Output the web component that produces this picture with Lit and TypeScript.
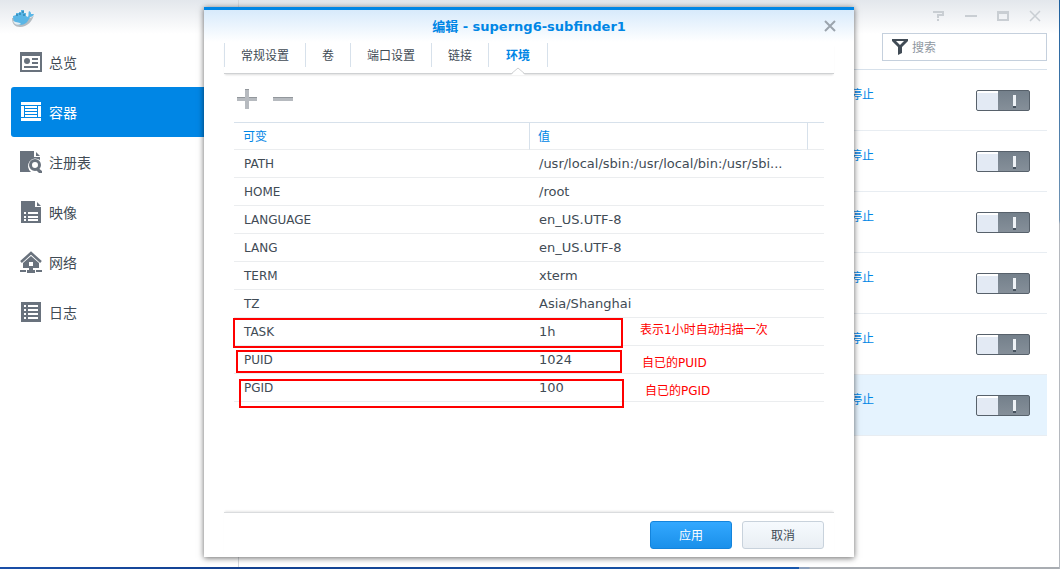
import { LitElement, html, css, svg } from "lit";
import { customElement, state } from "lit/decorators.js";

const icons: Record<string, unknown> = {
  overview: svg`<path fill-rule="evenodd" d="M0 1h22v20H0zM2 5v14h18V5z"/><circle cx="7" cy="10" r="3"/><path d="M12 7h6v2h-6zM12 11h6v2h-6zM4 15h14v2H4z"/>`,
  container: svg`<path d="M1 1h20v3H1zM1 17h20v3H1zM1 5h3v11H1zM18 5h3v11h-3zM5 5h12v2H5zM5 8h12v2H5zM5 11h12v2H5zM5 14h12v2H5z"/>`,
  registry: svg`<path d="M0 0h14v6h6v3a7 7 0 0 0-9 12H0z"/><path d="M16 1l4 4h-4z"/><circle cx="15" cy="14" r="4.500" fill="none" stroke="currentColor" stroke-width="3"/><path d="M17 16l5 4v2h-3l-3-3z"/>`,
  image: svg`<path fill-rule="evenodd" d="M1 0h14v6h6v16H1zM4 11v2h2v-2zM8 11v2h10v-2zM4 15v2h2v-2zM8 15v2h10v-2zM4 18v2h2v-2zM8 18v2h10v-2z"/><path d="M17 1l4 4h-4z"/>`,
  network: svg`<path d="M1 11L11 2l10 9" fill="none" stroke="currentColor" stroke-width="2.500"/><path fill-rule="evenodd" d="M11 5l8 7v5h-6v2h2v3H7v-3h2v-2H3v-5zM9 11v4h4v-4z"/><path d="M0 19h6v2H0zM16 19h6v2h-6z"/>`,
  log: svg`<path fill-rule="evenodd" d="M1 1h20v20H1zM4 4v2h2V4zM8 4v2h10V4zM4 8v2h2V8zM8 8v2h10V8zM4 12v2h2v-2zM8 12v2h10v-2zM4 16v2h2v-2zM8 16v2h10v-2z"/>`,
};

@customElement("app-root")
export class AppRoot extends LitElement {
  static styles = css`
    :host {
      display: block;
      position: relative;
      height: 100vh;
      overflow: hidden;
      box-sizing: border-box;
      color: #414b55;
      font: 12px/16px "DejaVu Sans", "Noto Sans CJK SC", sans-serif;
    }
    *, *::before, *::after { box-sizing: border-box; }
    button { font: inherit; cursor: pointer; }
    svg { display: block; }

    .desktop {
      height: 100%;
      display: grid;
      grid-template-rows: minmax(0, 1fr) 2px;
      padding-right: 1px;
      background: linear-gradient(#1c5f9e 0, #7295b4 220px, #b4b8be 224px, #b4b8be 100%);
    }
    .window {
      display: grid;
      grid-template-columns: 239px minmax(0, 1fr);
      background: linear-gradient(#e3e7ec, #fff 34px);
      min-height: 0;
    }
    .behind {
      background: linear-gradient(90deg, #1a4fa8 0, #12408f 240px, #1857ac 799px, #8b9fbb 799px, #8b9fbb 809px, #a9adb2 810px);
    }

    .side { border-right: 1px solid #d5d8dc; }
    .logo { display: block; margin: 9px 0 0 12px; }
    .nav { display: flex; flex-direction: column; padding: 10px 0 0 11px; }
    .item {
      display: flex;
      align-items: center;
      gap: 7px;
      height: 50px;
      padding-left: 9px;
      border-radius: 3px 0 0 3px;
      color: #414b55;
      font-size: 14px;
      line-height: 20px;
      text-decoration: none;
    }
    .item span { padding-top: 2px; }
    .item svg { color: #69727d; }
    .item.on, .item.on svg { color: #fff; }
    .item.on { background: #0086e5; }

    .main { display: flex; flex-direction: column; padding-right: 12px; }
    .controls { display: flex; justify-content: flex-end; gap: 16px; padding: 8px 4px 0 0; height: 33px; }
    .ctl { border: 0; padding: 0; width: 16px; height: 16px; background: none; color: #c9ced3; }
    .search {
      align-self: flex-end;
      display: flex;
      align-items: center;
      gap: 4px;
      width: 165px;
      height: 28px;
      padding: 0 9px;
      border: 1px solid #c5d0dd;
      background: #fff;
      color: #414b55;
    }
    .search input { flex: 1; min-width: 0; border: 0; padding: 2px 0 0; outline: 0; background: none; font: inherit; }
    .search input::placeholder { color: #8f979f; opacity: 1; }
    .list { margin: 8px 0 0; padding: 0; list-style: none; border-top: 1px solid #d7e1eb; }
    .row {
      display: flex;
      justify-content: space-between;
      align-items: flex-start;
      height: 61px;
      padding: 17px 17px 0 611px;
      border-bottom: 1px solid #e8edf2;
      color: #0086e5;
    }
    .row.on { background: #e5f3fe; }
    .toggle {
      appearance: none;
      margin: 3px 0 0;
      width: 54px;
      height: 21px;
      border: 1px solid #57616b;
      border-radius: 2px;
      background:
        linear-gradient(#eef2f6, #eef2f6) 36px 4px / 3px 11px no-repeat,
        linear-gradient(#46525e, #46525e) 36px 15px / 3px 2px no-repeat,
        linear-gradient(#fff 2px, #e3eaf4 2px) 0 0 / 21px 100% no-repeat,
        linear-gradient(#74808b, #858f99);
    }
    .toggle:checked { background: #0086e5; }

    .overlay {
      position: absolute;
      inset: 7px 2px 12px 0;
      display: flex;
      justify-content: center;
    }
    .dialog {
      display: flex;
      flex-direction: column;
      width: 650px;
      max-width: 100%;
      padding: 0 20px;
      border-top: 3px solid #0086e5;
      background: linear-gradient(#d7eafb, #fff 32px);
      box-shadow: 0 1px 6px rgba(0, 0, 0, 0.6);
    }
    .head { display: grid; grid-template-columns: 20px 1fr 20px; align-items: center; height: 33px; }
    .title { grid-column: 2; margin: 0; font-size: 13px; line-height: 16px; text-align: center; color: #0086e5; }
    .close { justify-self: end; border: 0; padding: 0; margin-right: -4px; width: 16px; height: 16px; background: none; color: #9ba4ad; }
    .tabs {
      display: flex;
      height: 31px;
      border-bottom: 1px solid #cfd1d3;
      box-shadow: 0 2px 2px -1px #ddd;
    }
    .tab {
      position: relative;
      height: 24px;
      padding: 2px 16px 0;
      border: 0;
      border-right: 1px solid #d7e1eb;
      background: none;
      color: #414b55;
    }
    .tab:first-child { border-left: 1px solid #d7e1eb; }
    .tab.on { color: #0086e5; font-weight: bold; padding: 2px 17px 0; }
    .tab.on svg { position: absolute; left: calc(50% - 7px); top: 24px; }
    .tools { display: flex; gap: 16px; padding: 15px 0 13px 13px; }
    .tool { border: 0; padding: 0; width: 20px; height: 20px; background: none; }

    .body { position: relative; flex: 1; margin: 0 10px; min-height: 0; }
    .grid { width: 100%; table-layout: fixed; border-collapse: separate; border-spacing: 0; border-top: 1px solid #d7e1eb; }
    .grid th { height: 27px; padding: 2px 8px 0; text-align: left; font-weight: normal; color: #0086e5; border-bottom: 1px solid #ebedef; border-right: 1px solid #d7e1eb; }
    .grid th:first-child { padding-left: 9px; }
    .grid th:last-child { border-right: 0; padding: 0; }
    .grid td { height: 28px; padding: 0 9px; border-bottom: 1px solid #ebedef; white-space: nowrap; }
    .grid td:first-child { padding-left: 10px; }
    .grid .value { font-size: 13px; }
    .grid .key { width: 296px; }
    .grid .end { width: 16px; }

    .mark { position: absolute; border: 2px solid #f00; pointer-events: none; }
    .note { position: absolute; color: #f00; white-space: nowrap; }
    .mark-task { left: -1px; top: 196px; width: 390px; height: 30px; }
    .mark-puid { left: 2px; top: 228px; width: 386px; height: 23px; }
    .mark-pgid { left: 5px; top: 257px; width: 385px; height: 29px; }
    .note-task { left: 406px; top: 200px; }
    .note-puid { left: 408px; top: 233px; }
    .note-pgid { left: 411px; top: 261px; }

    .foot {
      display: flex;
      justify-content: flex-end;
      gap: 10px;
      padding: 8px 10px;
      border-top: 1px solid #dadcde;
      box-shadow: 0 -2px 2px -1px #e8e8e8;
    }
    .btn { width: 82px; height: 28px; padding: 2px 0 0; border-radius: 3px; border: 1px solid #c8d2dc; background: linear-gradient(#f6fafe, #e9eef3); color: #414b55; }
    .btn.primary { border-color: #1484dc; background: linear-gradient(#33a8ff, #1a90ea); color: #fff; }
  `;

  @state() private nav = "container";
  @state() private tab = "环境";

  private items = [
    ["overview", "总览"],
    ["container", "容器"],
    ["registry", "注册表"],
    ["image", "映像"],
    ["network", "网络"],
    ["log", "日志"],
  ];
  private vars = [
    ["PATH", "/usr/local/sbin:/usr/local/bin:/usr/sbi..."],
    ["HOME", "/root"],
    ["LANGUAGE", "en_US.UTF-8"],
    ["LANG", "en_US.UTF-8"],
    ["TERM", "xterm"],
    ["TZ", "Asia/Shanghai"],
    ["TASK", "1h"],
    ["PUID", "1024"],
    ["PGID", "100"],
  ];

  private renderSide() {
    return html`<aside class="side">
      <svg class="logo" width="22" height="18" viewBox="0 0 22 18" aria-hidden="true">
        <path fill="#b4bcc2" d="M0 9h17c2 0 4-1 5-4-1 7-7 13-14 13-5 0-8-3-8-9z" />
        <path fill="#5ab6e6" d="M1 7l3-1V4h3V3h2V1h3v3h2v3l2 1c1-2 0-4 1-6 2 1 2 2 2 3h3c-1 2-2 3-4 3-2 5-5 8-10 8-4 0-7-3-7-9z" />
        <path fill="#3e93c0" d="M4 5h2v2H4zM7 4h2v2H7zM10 2h2v2h-2zM11 5h2v2h-2z" />
        <path fill="#e2edf3" d="M1 12c4 2 7 1 8 3-4 2-7 0-8-3z" />
      </svg>
      <nav class="nav">
        ${this.items.map(
          ([id, label]) => html`<a class="item ${this.nav === id ? "on" : ""}" href="#${id}" @click=${() => (this.nav = id)}>
            <svg width="22" height="22" viewBox="0 0 22 22" fill="currentColor" aria-hidden="true">${icons[id]}</svg><span>${label}</span>
          </a>`
        )}
      </nav>
    </aside>`;
  }

  private renderMain() {
    const ctl = (name: string, shape: unknown) => html`<button class="ctl" aria-label=${name}>
      <svg width="16" height="16" viewBox="0 0 16 16" fill="none" stroke="currentColor" stroke-width="2">${shape}</svg>
    </button>`;
    return html`<main class="main">
      <div class="controls">
        ${ctl("帮助", svg`<path d="M2 4h10v3H7v3M7 11v2" />`)}
        ${ctl("最小化", svg`<path d="M2 8h12" />`)}
        ${ctl("最大化", svg`<path d="M3 4h10v8H3zM3 5h10" />`)}
        ${ctl("关闭窗口", svg`<path d="M3 3l10 10M13 3L3 13" stroke-width="1.500" />`)}
      </div>
      <label class="search">
        <svg width="16" height="16" viewBox="0 0 16 16" aria-hidden="true"><path fill="#414b55" fill-rule="evenodd" d="M0 0h16v2l-6 6v6l-4 2V8L0 2zM4 2l4 4 4-4z" /></svg>
        <input type="text" placeholder="搜索" aria-label="搜索" />
      </label>
      <ul class="list">
        ${[1, 2, 3, 4, 5, 6].map(
          (n) => html`<li class="row ${n === 6 ? "on" : ""}">
            <span>停止</span><input class="toggle" type="checkbox" aria-label="启动容器 ${n}" />
          </li>`
        )}
      </ul>
    </main>`;
  }

  private renderDialog() {
    return html`<div class="overlay">
      <section class="dialog" role="dialog" aria-labelledby="dialog-title">
        <header class="head">
          <h2 class="title" id="dialog-title">编辑 - superng6-subfinder1</h2>
          <button class="close" aria-label="关闭">
            <svg width="16" height="16" viewBox="0 0 16 16" stroke="currentColor" stroke-width="2"><path d="M3 2l10 10M13 2L3 12" /></svg>
          </button>
        </header>
        <div class="tabs" role="tablist">
          ${["常规设置", "卷", "端口设置", "链接", "环境"].map(
            (t) => html`<button class="tab ${this.tab === t ? "on" : ""}" role="tab" aria-selected=${this.tab === t} @click=${() => (this.tab = t)}>${t}${this.tab === t
              ? html`<svg width="14" height="8" viewBox="0 0 14 8" aria-hidden="true"><path d="M0 8l7-7 7 7z" fill="#fff" /><path d="M0 7l7-6 7 6" fill="none" stroke="#cfd1d3" /></svg>`
              : ""}</button>`
          )}
        </div>
        <div class="tools">
          <button class="tool" aria-label="新增"><svg width="20" height="20"><path d="M8 0h4v8h8v4h-8v8H8v-8H0V8h8z" fill="#b6babf" /><path d="M8 0h4v1H8zM0 8h8v1H0zM12 8h8v1h-8z" fill="#92979c" /></svg></button>
          <button class="tool" aria-label="删除"><svg width="20" height="20"><path d="M0 8h20v4H0z" fill="#b6babf" /><path d="M0 8h20v1H0z" fill="#92979c" /></svg></button>
        </div>
        <div class="body">
          <table class="grid">
            <thead>
              <tr><th class="key">可变</th><th>值</th><th class="end"></th></tr>
            </thead>
            <tbody>
              ${this.vars.map(([k, v]) => html`<tr><td>${k}</td><td class="value">${v}</td><td></td></tr>`)}
            </tbody>
          </table>
          <div class="mark mark-task"></div>
          <div class="mark mark-puid"></div>
          <div class="mark mark-pgid"></div>
          <span class="note note-task">表示1小时自动扫描一次</span>
          <span class="note note-puid">自已的PUID</span>
          <span class="note note-pgid">自已的PGID</span>
        </div>
        <footer class="foot">
          <button class="btn primary">应用</button>
          <button class="btn">取消</button>
        </footer>
      </section>
    </div>`;
  }

  render() {
    return html`<div class="desktop">
        <div class="window">${this.renderSide()}${this.renderMain()}</div>
        <div class="behind"></div>
      </div>
      ${this.renderDialog()}`;
  }
}
